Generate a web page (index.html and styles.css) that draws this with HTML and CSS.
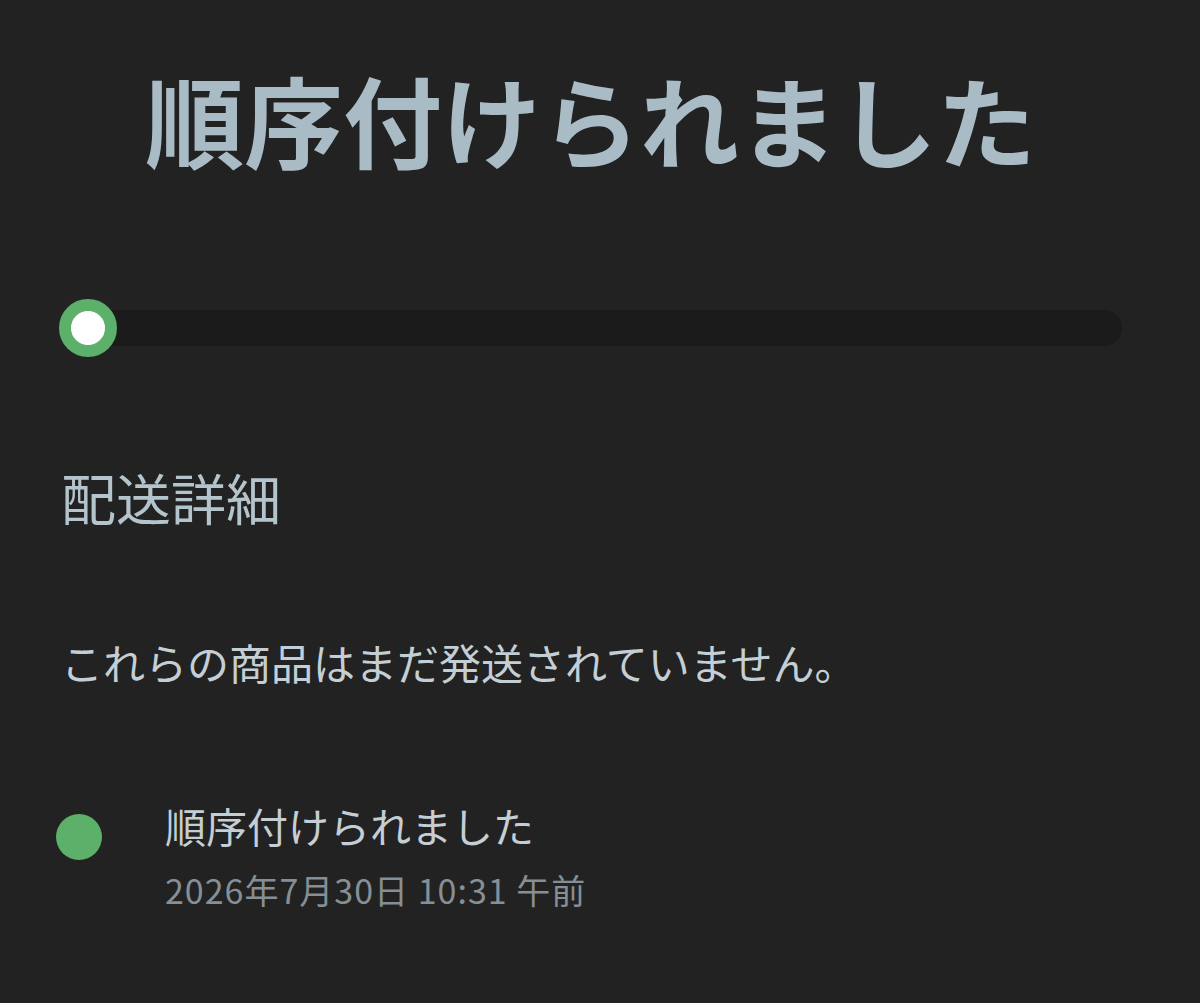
FILE: index.html
```html
<!DOCTYPE html>
<html lang="ja">
    <head>
        <meta charset="UTF-8">
        <meta name="viewport" content="width=device-width, initial-scale=1.0">
        <title>注文状況</title>
        <link rel="stylesheet" href="styles.css">
    </head>
    <body>
        <div class="pedido">
            <h1 class="estado">順序付けられました</h1>

            <div class="progreso">
                <div class="punto-actual"></div>
                <div class="pista"></div>
            </div>

            <h2 class="seccion">配送詳細</h2>
            <p class="aviso">これらの商品はまだ発送されていません。</p>

            <div class="historial">
                <div class="evento">
                    <div class="punto"></div>
                    <div class="evento-texto">
                        <div class="evento-nombre">順序付けられました</div>
                        <div class="evento-fecha">2026年7月30日 10:31 午前</div>
                    </div>
                </div>
            </div>
        </div>
    </body>
</html>
```

FILE: styles.css
```css
* {
    box-sizing: border-box;
    font-family: "Noto Sans CJK JP", "Noto Sans", sans-serif;
}

body {
    margin: 0;
    background: #222222;
    color: #c8d2d8;
}

.pedido {
    padding: 59px 78px 40px 59px;
}

.estado {
    margin: 0;
    font-size: 99px;
    line-height: 118px;
    font-weight: 700;
    color: #a9bcc6;
    text-align: center;
}

/* Barra de progreso del pedido */
.progreso {
    display: flex;
    align-items: center;
    margin-top: 122px;
}

.punto-actual {
    position: relative;
    z-index: 1;
    flex: none;
    width: 58px;
    height: 58px;
    border-radius: 50%;
    background: #fff;
    border: 12px solid #5cb06a;
}

.pista {
    flex: 1;
    height: 36px;
    margin-left: -29px;
    border-radius: 18px;
    background: #1b1b1b;
}

.seccion {
    margin: 103px 0 0 2px;
    font-size: 55px;
    line-height: 72px;
    font-weight: 400;
    color: #b4c4cc;
}

.aviso {
    margin: 102px 0 0 2px;
    font-size: 42px;
    line-height: 56px;
    color: #c4cfd5;
}

/* Historial de eventos */
.historial {
    margin-top: 110px;
}

.evento {
    display: flex;
    align-items: flex-start;
}

.punto {
    flex: none;
    width: 46px;
    height: 46px;
    margin: 14px 0 0 -3px;
    border-radius: 50%;
    background: #5cb06a;
}

.evento-texto {
    margin-left: 63px;
}

.evento-nombre {
    font-size: 41px;
    line-height: 50px;
    color: #c4ced4;
}

.evento-fecha {
    margin-top: 18px;
    font-size: 34px;
    line-height: 44px;
    letter-spacing: 1px;
    color: #868f95;
}
```
